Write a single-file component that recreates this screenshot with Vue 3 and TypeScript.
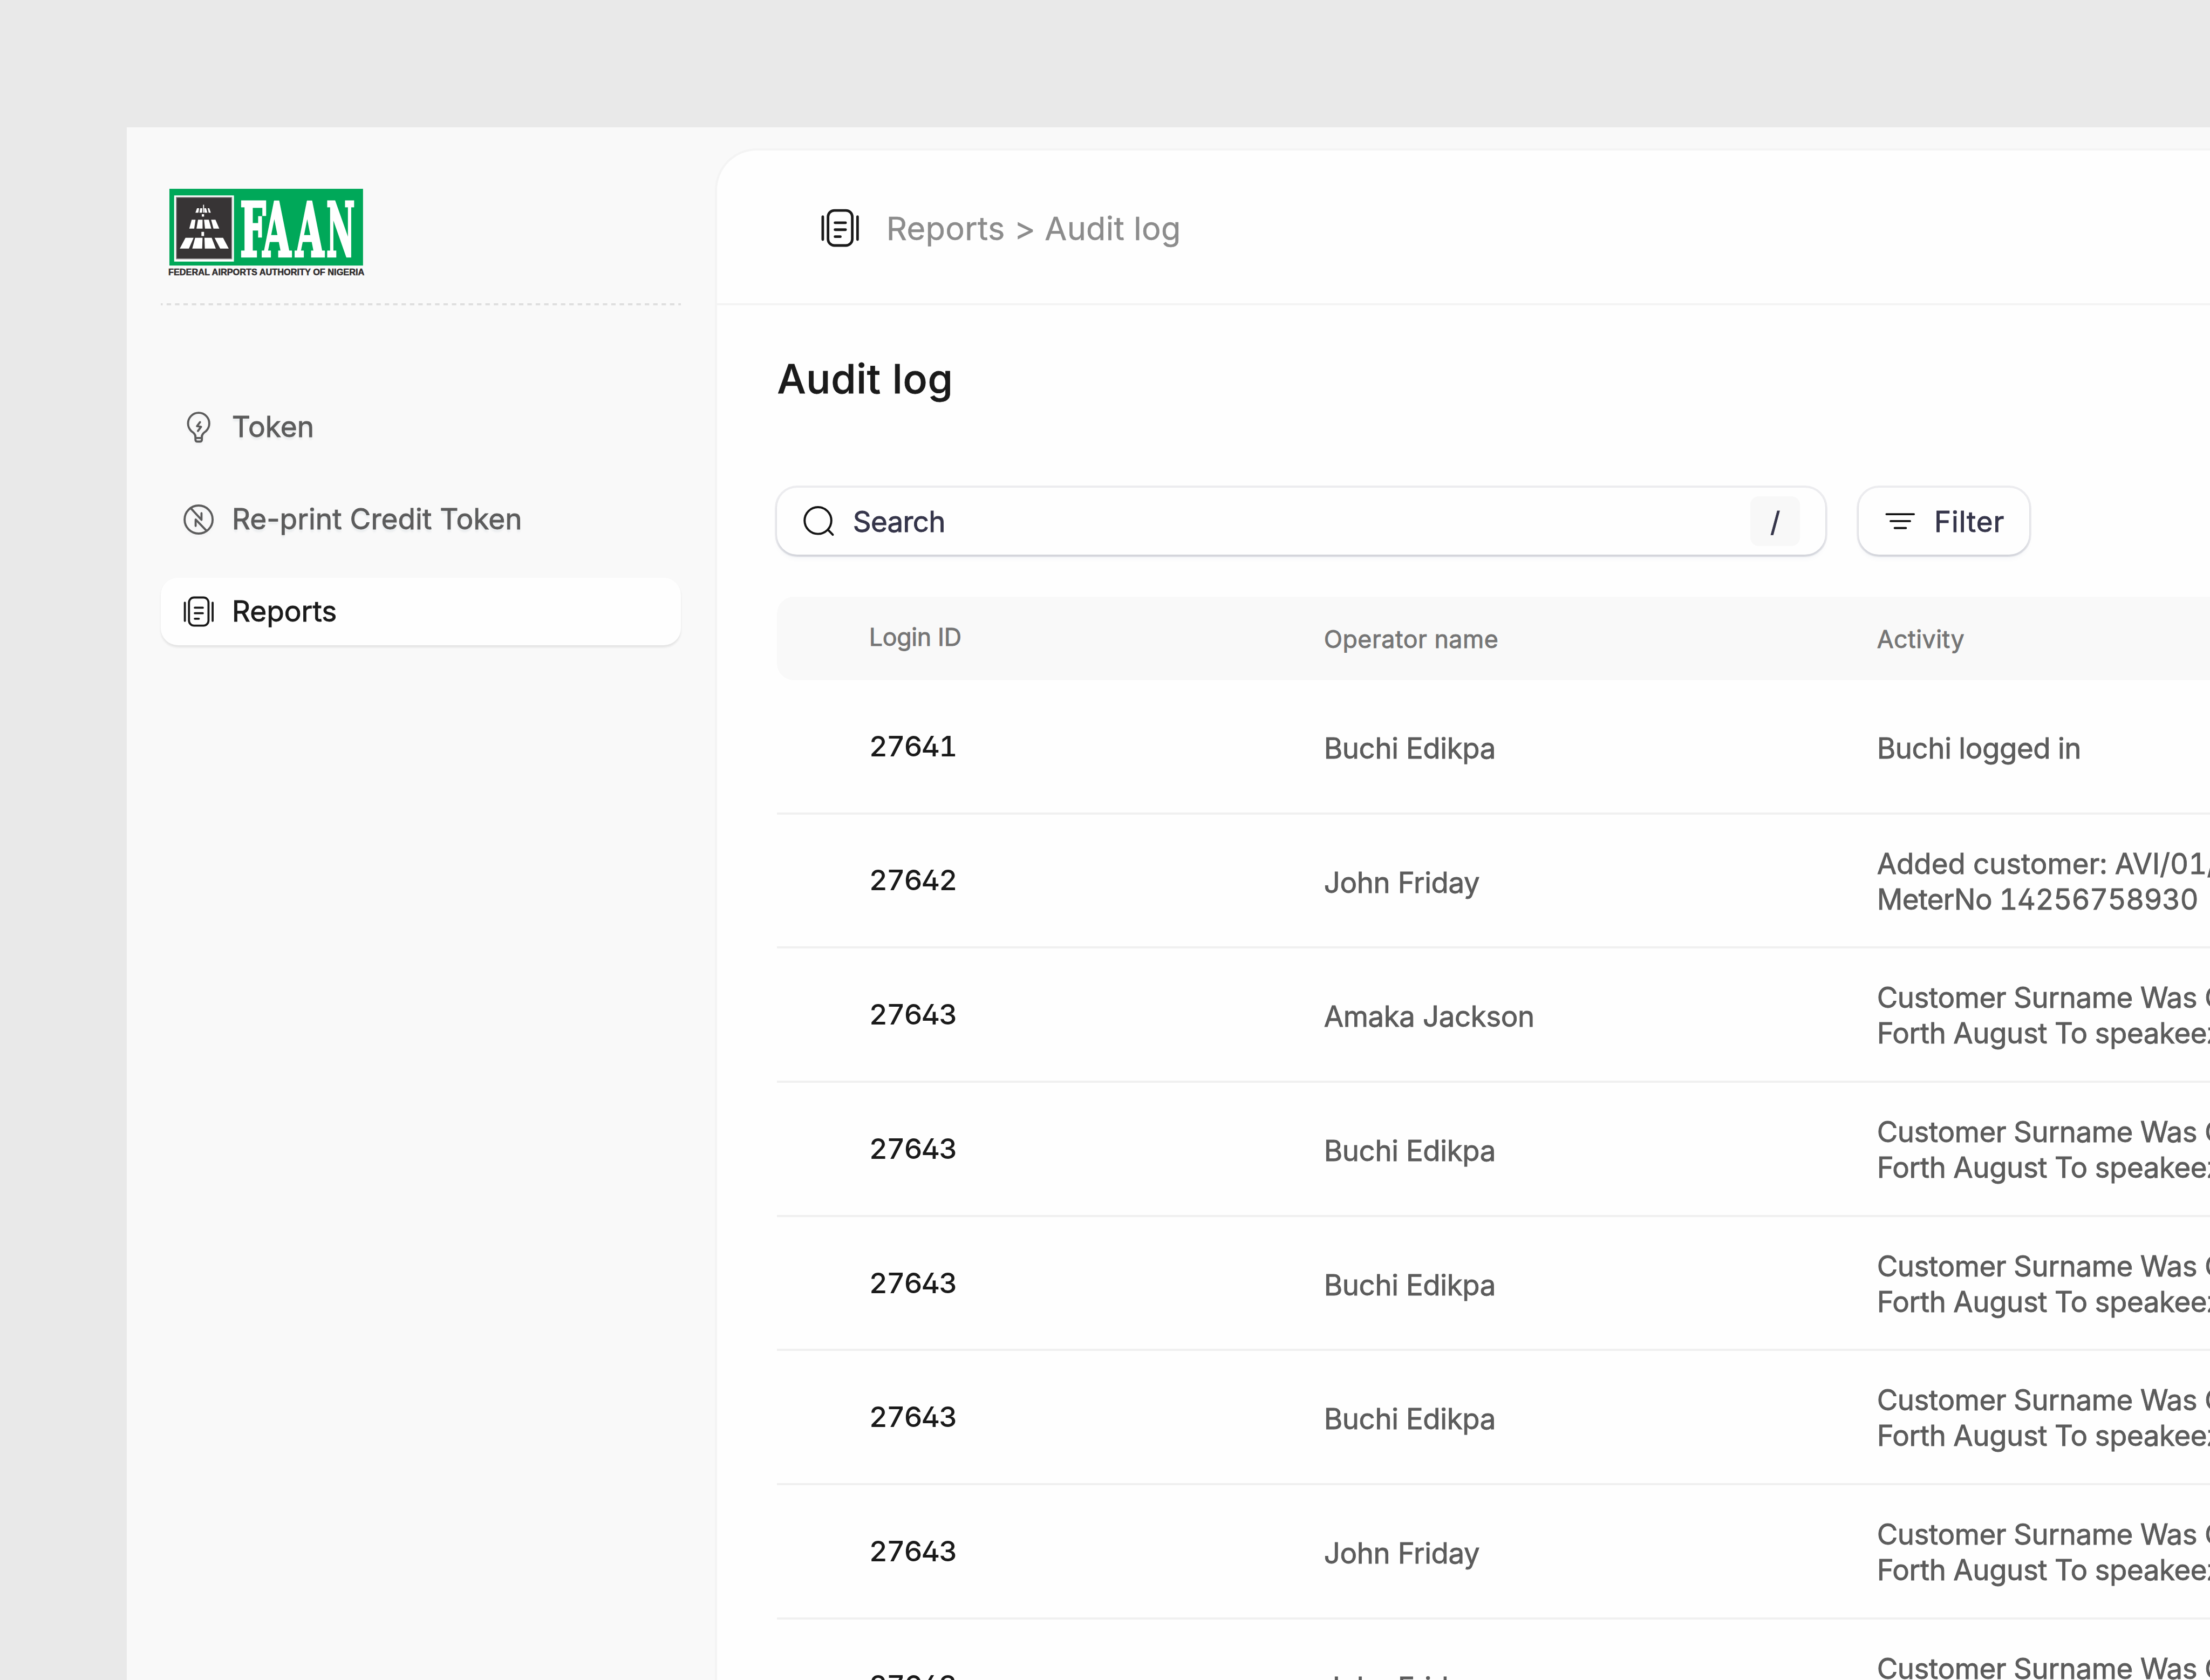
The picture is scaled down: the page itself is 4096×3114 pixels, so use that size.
<script setup lang="ts">
interface NavItem {
  label: string
  icon: 'bulb' | 'blocked' | 'report'
  active?: boolean
}

interface ActivityLine {
  text: string
  tracking?: 'wide' | 'tight'
}

interface LogRow {
  id: string
  operator: string
  activity: ActivityLine[]
}

const navItems: NavItem[] = [
  { label: 'Token', icon: 'bulb' },
  { label: 'Re-print Credit Token', icon: 'blocked' },
  { label: 'Reports', icon: 'report', active: true },
]

const renamed: ActivityLine[] = [
  { text: 'Customer Surname Was Changed' },
  { text: 'Forth August To speakeezy' },
]

const rows: LogRow[] = [
  { id: '27641', operator: 'Buchi Edikpa', activity: [{ text: 'Buchi logged in' }] },
  {
    id: '27642',
    operator: 'John Friday',
    activity: [
      { text: 'Added customer: AVI/01/', tracking: 'wide' },
      { text: 'MeterNo 14256758930', tracking: 'tight' },
    ],
  },
  { id: '27643', operator: 'Amaka Jackson', activity: renamed },
  { id: '27643', operator: 'Buchi Edikpa', activity: renamed },
  { id: '27643', operator: 'Buchi Edikpa', activity: renamed },
  { id: '27643', operator: 'Buchi Edikpa', activity: renamed },
  { id: '27643', operator: 'John Friday', activity: renamed },
  { id: '27643', operator: 'John Friday', activity: renamed },
]

// Condensed slab letters of the wordmark: left edge and horizontal squeeze.
const logoLetters = [
  { char: 'F', x: 452, squeeze: 0.54 },
  { char: 'A', x: 494.5, squeeze: 0.54 },
  { char: 'A', x: 556.5, squeeze: 0.54 },
  { char: 'N', x: 614.5, squeeze: 0.46 },
]
</script>

<template>
  <div class="stage">
    <div class="window">
      <aside class="sidebar">
        <svg class="logo" viewBox="316 353 372 168" role="img" aria-label="FAAN">
          <rect x="319" y="355" width="364.5" height="144.5" fill="#00a859" />
          <rect x="328" y="367.5" width="112.5" height="124.5" fill="#fff" />
          <rect x="332" y="371" width="104.5" height="116" fill="#373435" stroke="#9b999a" stroke-width="1.6" />
          <g fill="#fff">
            <path d="M349.3 447.3H364.6L355.7 467.5H338.6ZM367.5 447.3H381.4L380.7 467.5H362ZM385 447.3H398.6L406.4 467.5H385.7ZM404 447.3H420L430.7 467.5H414.6Z" />
            <path d="M361 413.3H368.2L365.7 430H356.4ZM372.9 413.3H381.4V430H370ZM384.3 413.3H393.2L397.9 430H386ZM397.5 413.3H405.7L412.9 430H402Z" />
            <path d="M371 391.5H375L373.5 400H368ZM377 391.5H381L380.5 400H375.5ZM384.5 391.5H388L390.5 400H385ZM391 391.5H394L397 400H393Z" />
            <path d="M379.3 436H384.3V444H379.3ZM380 402.7H384.3V407.3H380ZM382.4 385H384.3V400H382.4Z" />
          </g>
          <text
            v-for="(letter, i) in logoLetters"
            :key="i"
            class="logo-letter"
            :transform="`translate(${letter.x} 482) scale(${letter.squeeze} 1)`"
          >{{ letter.char }}</text>
          <text class="logo-caption" x="317" y="517.5" textLength="369" lengthAdjust="spacingAndGlyphs">FEDERAL AIRPORTS AUTHORITY OF NIGERIA</text>
        </svg>

        <svg class="dashes"><line x1="0" y1="2" x2="979" y2="2" /></svg>

        <nav class="nav">
          <a v-for="item in navItems" :key="item.label" class="nav-item" :class="{ active: item.active }">
            <svg class="icon" viewBox="0 0 63 63">
              <template v-if="item.icon === 'bulb'">
                <path d="M25.6 49C25.3 43.5 22 42 17.8 38.6A20 20 0 1 1 45.6 38.6C41.4 42 38.1 43.5 37.8 49" />
                <path d="M25.6 47.5V54.5Q25.6 58.4 29.5 58.4H33.9Q37.8 58.4 37.8 54.5V47.5M25.6 51.7H37.8" />
                <path d="M34.3 21.8L28.6 29.4L36.2 30.6L30.3 38.4" />
              </template>
              <template v-else-if="item.icon === 'blocked'">
                <circle cx="31.6" cy="31.5" r="26.4" />
                <path d="M17 10.3L37 32V19.6M26 43.4V31.4L46.4 52.4" />
              </template>
              <template v-else>
                <rect x="13.5" y="4.6" width="36.7" height="53" rx="9.5" />
                <path d="M5.7 14.3V48.6M58 14.3V48.6M24.5 23.8H39.5M24.5 34.2H39.5M24.5 44.5H32" />
              </template>
            </svg>
            <span>{{ item.label }}</span>
          </a>
        </nav>
      </aside>

      <main class="main">
        <header class="topbar">
          <svg class="icon icon-lg" viewBox="0 0 63 63">
            <rect x="13.5" y="4.9" width="36.4" height="52.6" rx="9.5" />
            <path d="M5.6 14.3V48.6M57.8 14.3V48.6M24 23.4H39.8M24 33.8H39.8M24 44.3H32" />
          </svg>
          <span class="crumbs">Reports &gt; Audit log</span>
        </header>

        <section class="content">
          <h1 class="title">Audit log</h1>

          <div class="toolbar">
            <div class="field search">
              <svg class="icon tool-icon" viewBox="0 0 64 64">
                <circle cx="30.5" cy="31.3" r="25.2" />
                <path d="M49.5 49L58.4 58.1" />
              </svg>
              <span class="search-label">Search</span>
              <kbd class="key">/</kbd>
            </div>
            <button class="field filter" type="button">
              <svg class="icon tool-icon" viewBox="0 0 64 64">
                <path d="M6.5 19.4H58M14.3 32.4H50.8M22 45.4H43" />
              </svg>
              <span class="filter-label">Filter</span>
            </button>
          </div>

          <div class="table">
            <div class="row head">
              <span class="head-id">Login ID</span>
              <span>Operator name</span>
              <span>Activity</span>
            </div>
            <div v-for="(row, i) in rows" :key="i" class="row">
              <span class="id">{{ row.id }}</span>
              <span class="operator">{{ row.operator }}</span>
              <div class="activity" :class="{ single: row.activity.length === 1 }">
                <div v-for="line in row.activity" :key="line.text" :class="line.tracking">{{ line.text }}</div>
              </div>
            </div>
          </div>
        </section>
      </main>
    </div>
  </div>
</template>

<style>
html,
body {
  overflow: hidden;
  background: #e9e9e9;
}
</style>

<style scoped>
* {
  box-sizing: border-box;
}

.stage {
  zoom: 0.984615;
  width: 4160px;
  height: 3163px;
  padding: 240px 0 0 239px;
  overflow: hidden;
  background: #e9e9e9;
  font-family: Inter, 'Liberation Sans', sans-serif;
  font-size: 53.6px;
  white-space: nowrap;
}

.window {
  display: flex;
  height: 2923px;
  background: #f9f9f9;
}

/* Sidebar */
.sidebar {
  flex: none;
  width: 1107px;
  padding: 113px 64px 0 64px;
}

.logo {
  display: block;
  width: 372px;
  height: 168px;
  margin-left: 13px;
}

.logo-letter {
  font-family: 'DejaVu Serif Condensed', 'DejaVu Serif', serif;
  font-weight: 700;
  font-size: 141px;
  fill: #fff;
  stroke: #fff;
  stroke-width: 4.6;
}

.logo-caption {
  font-family: 'Liberation Sans', sans-serif;
  font-weight: 700;
  font-size: 16.4px;
  fill: #2f2c2d;
  stroke: #2f2c2d;
  stroke-width: 0.5;
}

.dashes {
  display: block;
  width: 979px;
  height: 4px;
  margin-top: 50px;
}

.dashes line {
  stroke: #dfdfdf;
  stroke-width: 4;
  stroke-dasharray: 8.4 7.39;
  stroke-dashoffset: 4.8;
}

.nav {
  display: flex;
  flex-direction: column;
  gap: 47.4px;
  margin-top: 165.8px;
}

.nav-item {
  display: flex;
  align-items: center;
  gap: 31.5px;
  height: 126.3px;
  padding-left: 39px;
  border-radius: 32px;
  color: #5c5c5c;
  font-size: 54px;
  line-height: 68px;
  -webkit-text-stroke: 0.9px currentColor;
  text-shadow: 0 5px 4px rgba(20, 50, 90, 0.07);
}

.nav-item .icon {
  filter: drop-shadow(0 5px 2px rgba(20, 50, 90, 0.03));
}

.nav-item.active {
  background: #fefefe;
  color: #1a1a1a;
  text-shadow: none;
  box-shadow: 0 4px 4px rgba(20, 25, 25, 0.09);
}

.nav-item.active .icon {
  filter: none;
}

.icon {
  flex: none;
  width: 63px;
  height: 63px;
  fill: none;
  stroke: currentColor;
  stroke-width: 3.9;
  stroke-linecap: round;
  stroke-linejoin: round;
}

/* Main panel */
.main {
  flex: 1;
  min-width: 0;
  margin-top: 39px;
  border: solid #f4f4f4;
  border-width: 4.1px 0 0 4.1px;
  border-top-left-radius: 79px;
  background: #fefefe;
  overflow: hidden;
}

.topbar {
  display: flex;
  align-items: center;
  gap: 47.5px;
  height: 292px;
  padding: 4px 0 0 192px;
  border-bottom: 4.1px solid #f4f4f4;
  color: #8c8c8c;
  font-size: 60.4px;
  line-height: 80px;
  letter-spacing: 0.3px;
  -webkit-text-stroke: 0.5px currentColor;
}

.crumbs {
  padding-top: 1px;
}

.icon-lg {
  width: 79px;
  height: 79px;
  color: #1a1a1a;
}

.content {
  padding: 91px 0 0 112px;
}

.title {
  margin: 0;
  color: #1a1a1a;
  font-size: 76px;
  font-weight: 500;
  line-height: 94px;
  letter-spacing: 0.8px;
  text-indent: 1px;
  -webkit-text-stroke: 0.8px currentColor;
}

.toolbar {
  display: flex;
  gap: 63px;
  margin-top: 158px;
}

.field {
  display: flex;
  align-items: center;
  gap: 32px;
  height: 126px;
  padding: 0 47.5px;
  border: 0;
  border-radius: 38px;
  background: #fefefe;
  color: #35354a;
  font: inherit;
  line-height: 68px;
  -webkit-text-stroke: 0.9px currentColor;
  box-shadow:
    0 0 0 4px rgba(25, 25, 65, 0.08),
    0 4px 4px rgba(20, 30, 60, 0.09),
    0 8px 10px rgba(40, 60, 140, 0.03);
}

.search {
  width: 1974px;
}

.search-label {
  flex: 1;
  padding-top: 4px;
  letter-spacing: -0.7px;
}

.tool-icon {
  width: 64px;
  height: 64px;
  color: #141414;
  stroke-width: 4;
}

.key {
  display: flex;
  align-items: center;
  justify-content: center;
  width: 94px;
  height: 94px;
  padding-top: 4px;
  border-radius: 16px;
  background: #f8f8f8;
  font: inherit;
  font-size: 52px;
}

.filter {
  width: 321px;
  padding: 0 0 0 46px;
}

.filter-label {
  padding-top: 4px;
  letter-spacing: 0.9px;
}

/* Table */
.table {
  margin-top: 79px;
}

.row {
  display: grid;
  grid-template-columns: 856px 1041px 1fr;
  align-items: center;
  height: 252.6px;
  padding-left: 174px;
  border-bottom: 4.1px solid #f0f0f0;
  color: #5c5c5c;
  line-height: 67px;
  letter-spacing: -0.4px;
  -webkit-text-stroke: 0.9px currentColor;
}

.row.head {
  height: 157.6px;
  border: 0;
  border-radius: 32px 0 0 32px;
  background: #f9f9f9;
  color: #757575;
  font-size: 45.5px;
  line-height: 56px;
  letter-spacing: 0.5px;
  padding-top: 5px;
}

.head-id {
  padding-bottom: 8px;
  letter-spacing: -0.4px;
}

.id {
  padding-top: 1px;
  color: #1a1a1a;
  font-weight: 500;
  font-feature-settings: 'tnum', 'cv02';
  letter-spacing: -1.9px;
  -webkit-text-stroke: 0;
}

.operator {
  padding-top: 9.4px;
  letter-spacing: -0.4px;
}

.activity {
  padding-top: 5.4px;
  font-feature-settings: 'tnum', 'cv02';
}

.activity.single {
  padding-top: 9.4px;
}

.wide {
  letter-spacing: 0;
}

.tight {
  letter-spacing: -0.7px;
}
</style>
